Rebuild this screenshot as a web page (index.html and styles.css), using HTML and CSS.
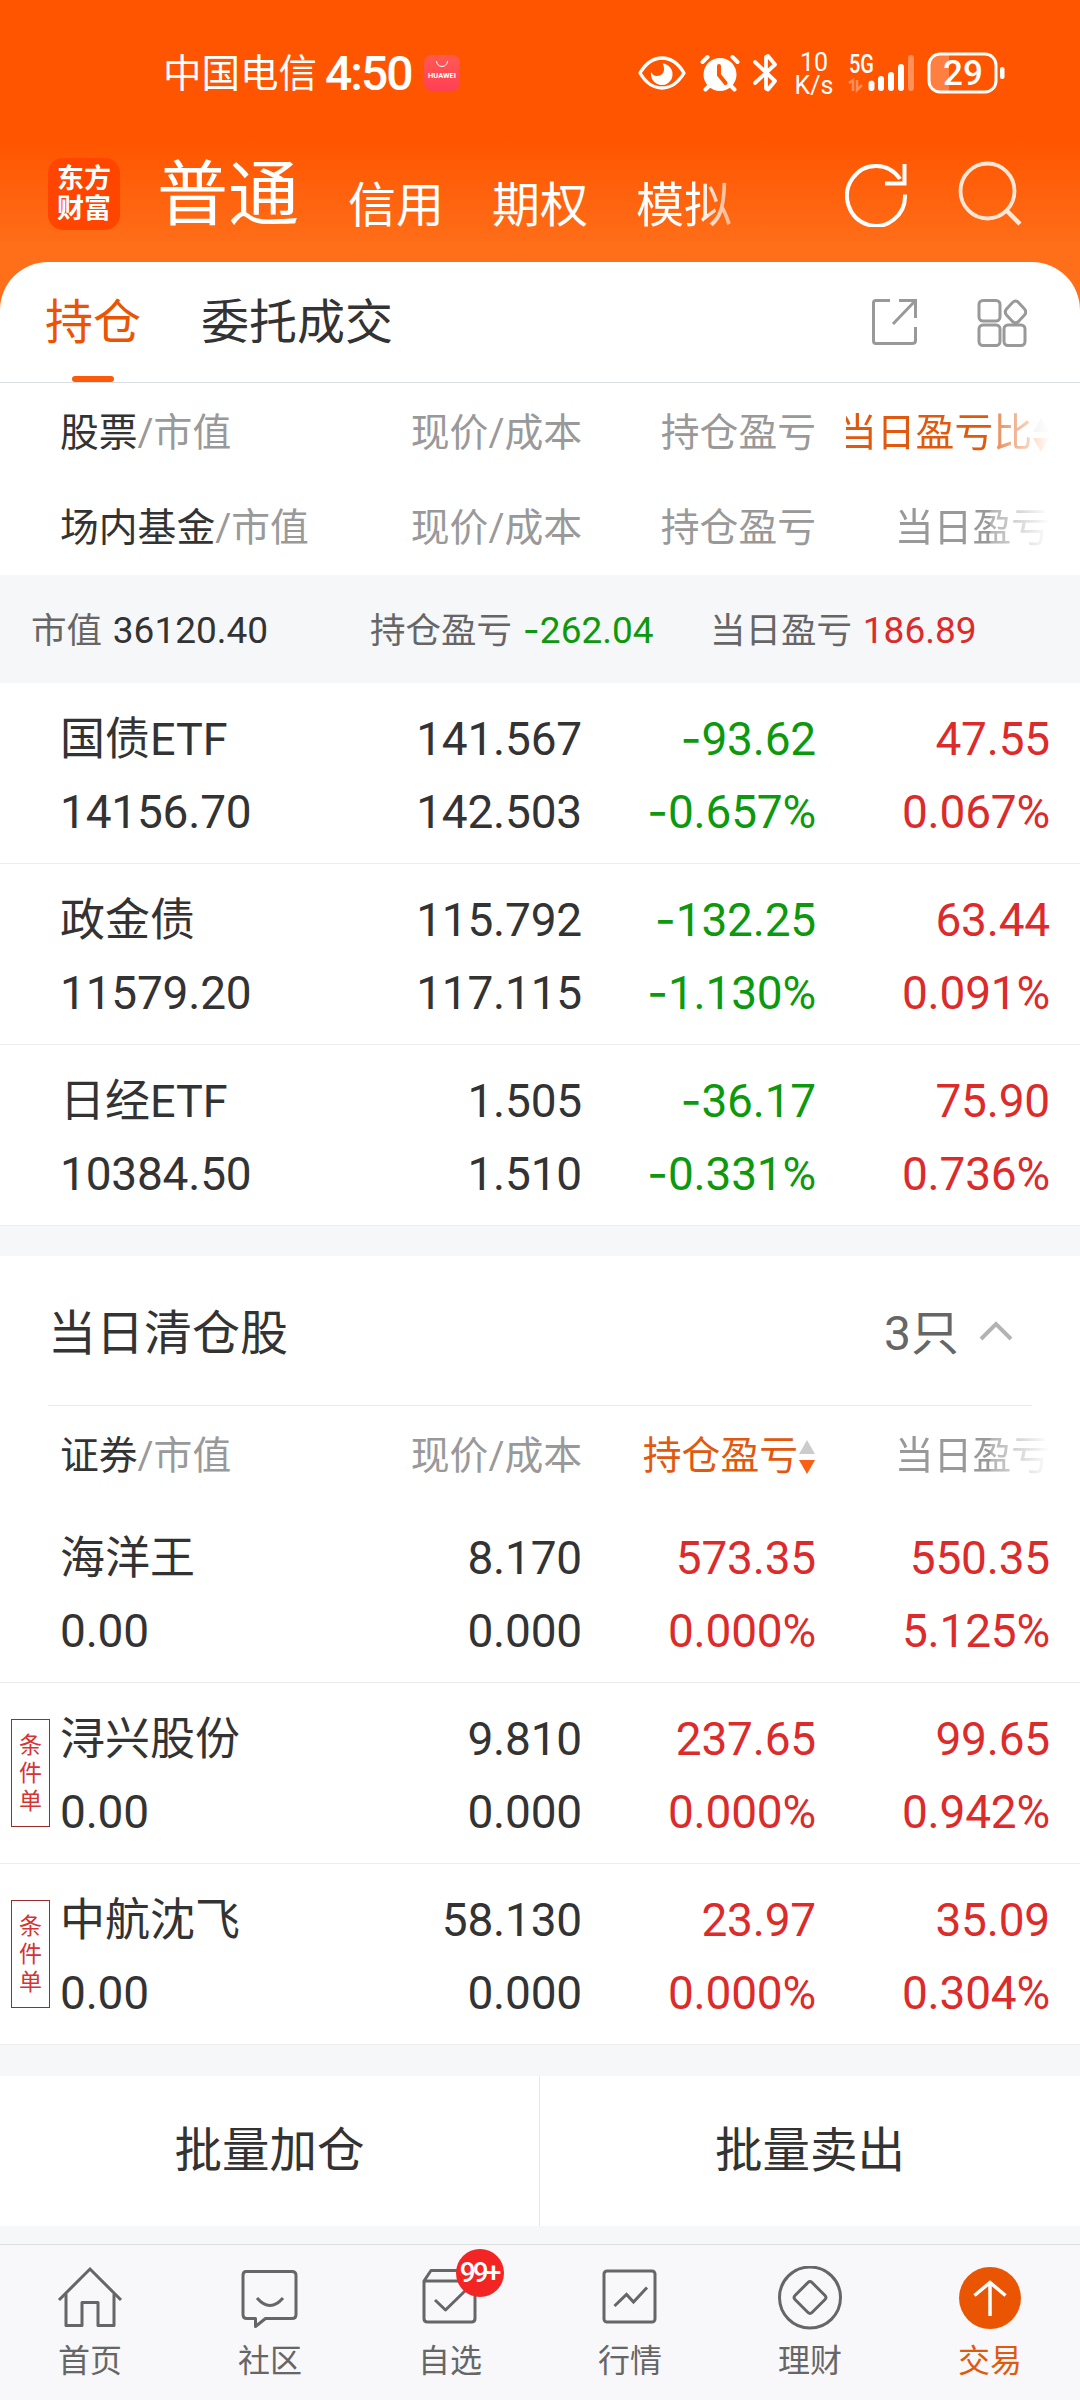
FILE: index.html
```html
<!DOCTYPE html>
<html lang="zh-CN">
<head>
	<meta charset="utf-8">
	<title>持仓</title>
	<link rel="stylesheet" href="styles.css">
</head>
<body>
	<header class="header">
		<div class="status">
			<span class="carrier">中国电信</span>
			<span class="clock">4:50</span>
			<svg class="huawei" width="36" height="36" viewBox="0 0 36 36">
				<defs>
					<linearGradient id="hw" x1="0" y1="0" x2="0" y2="1">
						<stop offset="0" stop-color="#ff5a52"/>
						<stop offset="1" stop-color="#ff3f55"/>
					</linearGradient>
				</defs>
				<rect width="36" height="36" rx="8" fill="url(#hw)"/>
				<path d="M12.5 6a5.5 5.5 0 0 0 11 0" fill="none" stroke="#fff" stroke-width="1"/>
				<text x="18" y="23" text-anchor="middle" textLength="28" lengthAdjust="spacingAndGlyphs" class="huawei-text">HUAWEI</text>
			</svg>
			<div class="status-right">
				<svg class="eye" width="48" height="34" viewBox="0 0 48 34">
					<path d="M2 17C8 7 15 2 24 2s16 5 22 15c-6 10-13 15-22 15S8 27 2 17z" fill="none" stroke="#fff" stroke-width="3.4" stroke-linejoin="round"/>
					<path d="M24.500 7.500A10.800 10.800 0 1 1 13.200 16c1 2.500 3 4 5.500 4 4.500 0 7.300-3 7.300-6.500 0-2.500-.5-4.500-1.500-6z" fill="#fff"/>
				</svg>
				<svg class="alarm" width="40" height="38" viewBox="0 0 40 38">
					<circle cx="20" cy="20.500" r="16.500" fill="#fff"/>
					<path d="M2.500 8l5-5M37.500 8l-5-5M5.500 35.500l5-5M34.500 35.500l-5-5" stroke="#fff" stroke-width="4" stroke-linecap="round"/>
					<path d="M19 12v9l6.500 8" fill="none" stroke="#ff5500" stroke-width="4" stroke-linecap="round" stroke-linejoin="round"/>
				</svg>
				<svg class="bluetooth" width="26" height="38" viewBox="0 0 26 38">
					<path d="M3 8l20 19-7 8.500-2-1V3l2-1 7 8.500L3 29" fill="none" stroke="#fff" stroke-width="3.800" stroke-linejoin="round" stroke-linecap="round"/>
				</svg>
				<div class="speed"><span>10</span><span>K/s</span></div>
				<svg class="signal" width="68" height="40" viewBox="0 0 68 40">
					<text x="1" y="20" textLength="25" lengthAdjust="spacingAndGlyphs" class="signal-text">5G</text>
					<path d="M1 30l4-3v11M9 27v10l5-5" fill="none" stroke="#fff" stroke-opacity=".35" stroke-width="2.500"/>
					<g stroke="#fff" stroke-width="6" stroke-linecap="round">
						<path d="M23.500 30.500v4.500M33 26v9M43 22v13M53 14v21"/>
						<path d="M63 5v30" stroke-opacity=".35"/>
					</g>
				</svg>
				<svg class="battery" width="80" height="42" viewBox="0 0 80 42">
					<path d="M3 13Q3 3 13 3h9v36h-9Q3 39 3 29z" fill="#fff" fill-opacity=".25"/>
					<rect x="2" y="2" width="67" height="38" rx="11" fill="none" stroke="#fff" stroke-width="3"/>
					<rect x="73" y="15" width="4.500" height="12" rx="2" fill="#fff"/>
					<text x="36" y="33" text-anchor="middle" class="battery-text">29</text>
				</svg>
			</div>
		</div>

		<div class="topbar">
			<div class="logo"><span>东方</span><span>财富</span></div>
			<nav class="accounts">
				<a class="account current">普通</a>
				<a class="account">信用</a>
				<a class="account">期权</a>
				<a class="account fading">模拟</a>
			</nav>
			<svg class="refresh" width="64" height="66" viewBox="0 0 64 66">
				<path d="M60 33.500A29 30 0 1 1 55 18" fill="none" stroke="#fff" stroke-width="4"/>
				<path d="M59.500 3v19.500H40" fill="none" stroke="#fff" stroke-width="4"/>
			</svg>
			<svg class="search" width="66" height="66" viewBox="0 0 66 66">
				<ellipse cx="30.500" cy="31" rx="27" ry="27.500" fill="none" stroke="#ffe7d8" stroke-width="3.800"/>
				<path d="M49.500 50.500L63 64" stroke="#ffe7d8" stroke-width="4.500"/>
			</svg>
		</div>
	</header>

	<main>
		<div class="tabs">
			<a class="tab active">持仓</a>
			<a class="tab">委托成交</a>
			<svg class="share" width="48" height="48" viewBox="0 0 48 48" fill="none" stroke="#999" stroke-width="3">
				<path d="M19 2.500H5q-2.500 0-2.500 2.500v38q0 2.500 2.500 2.500h36q3.500 0 3.500-3V29"/>
				<path d="M28 2.500h16.500V20M44.500 2.500L22 26"/>
			</svg>
			<svg class="grid-icon" width="50" height="50" viewBox="0 0 50 50" fill="none" stroke="#999" stroke-width="3">
				<rect x="2" y="2.500" width="21" height="20.500" rx="4"/>
				<rect x="2" y="27" width="21" height="20.500" rx="4"/>
				<rect x="27" y="27" width="21" height="20.500" rx="4"/>
				<path d="M35.500 4.500q3-3 6 0l6 6.500q2.500 3 0 6l-6 6.500q-3 2.500-6 0l-6-6.500q-2.500-3 0-6z"/>
			</svg>
		</div>

		<div class="cols cols-head">
			<span><b>股票</b>/市值</span>
			<span>现价/成本</span>
			<span>持仓盈亏</span>
			<span class="sorted fade">当日盈亏比<i class="sort"></i></span>
		</div>
		<div class="cols cols-head cols-head-fund">
			<span><b>场内基金</b>/市值</span>
			<span>现价/成本</span>
			<span>持仓盈亏</span>
			<span class="fade">当日盈亏</span>
		</div>

		<div class="summary">
			<span class="sum sum-value">市值 <em>36120.40</em></span>
			<span class="sum sum-hold">持仓盈亏 <em class="down"><i class="minus">-</i>262.04</em></span>
			<span class="sum">当日盈亏 <em class="up">186.89</em></span>
		</div>

		<section>
			<div class="cols row">
				<div><p class="name">国债ETF</p><p>14156.70</p></div>
				<div><p>141.567</p><p>142.503</p></div>
				<div class="down"><p><i class="minus">-</i>93.62</p><p><i class="minus">-</i>0.657%</p></div>
				<div class="up"><p>47.55</p><p>0.067%</p></div>
			</div>
			<div class="cols row">
				<div><p class="name">政金债</p><p>11579.20</p></div>
				<div><p>115.792</p><p>117.115</p></div>
				<div class="down"><p><i class="minus">-</i>132.25</p><p><i class="minus">-</i>1.130%</p></div>
				<div class="up"><p>63.44</p><p>0.091%</p></div>
			</div>
			<div class="cols row">
				<div><p class="name">日经ETF</p><p>10384.50</p></div>
				<div><p>1.505</p><p>1.510</p></div>
				<div class="down"><p><i class="minus">-</i>36.17</p><p><i class="minus">-</i>0.331%</p></div>
				<div class="up"><p>75.90</p><p>0.736%</p></div>
			</div>
		</section>

		<div class="cleared-title">
			<h2>当日清仓股</h2>
			<span class="count">3只</span>
			<svg width="34" height="20" viewBox="0 0 34 20">
				<path d="M2 18L17 3l15 15" fill="none" stroke="#b3b3b3" stroke-width="4"/>
			</svg>
		</div>

		<div class="cols cols-head cols-head-cleared">
			<span><b>证券</b>/市值</span>
			<span>现价/成本</span>
			<span class="sorted">持仓盈亏<i class="sort"></i></span>
			<span class="fade">当日盈亏</span>
		</div>

		<section>
			<div class="cols row">
				<div><p class="name">海洋王</p><p>0.00</p></div>
				<div><p>8.170</p><p>0.000</p></div>
				<div class="up"><p>573.35</p><p>0.000%</p></div>
				<div class="up"><p>550.35</p><p>5.125%</p></div>
			</div>
			<div class="cols row">
				<div><p class="name">浔兴股份</p><p>0.00</p></div>
				<div><p>9.810</p><p>0.000</p></div>
				<div class="up"><p>237.65</p><p>0.000%</p></div>
				<div class="up"><p>99.65</p><p>0.942%</p></div>
				<span class="tag">条件单</span>
			</div>
			<div class="cols row">
				<div><p class="name">中航沈飞</p><p>0.00</p></div>
				<div><p>58.130</p><p>0.000</p></div>
				<div class="up"><p>23.97</p><p>0.000%</p></div>
				<div class="up"><p>35.09</p><p>0.304%</p></div>
				<span class="tag">条件单</span>
			</div>
		</section>

		<div class="batch">
			<a>批量加仓</a>
			<a>批量卖出</a>
		</div>
	</main>

	<footer class="tabbar">
		<a>
			<svg width="66" height="66" viewBox="0 0 66 66" fill="none" stroke="#666" stroke-width="3">
				<path d="M2 34L33 3l31 31"/>
				<path d="M9 28v31.500h16V36.500h16v23h16V28" stroke-linejoin="round"/>
			</svg>
			<span>首页</span>
		</a>
		<a>
			<svg width="66" height="66" viewBox="0 0 66 66" fill="none" stroke="#666" stroke-width="3" stroke-linejoin="round">
				<path d="M9 5.500h46q4 0 4 4v39q0 4-4 4H28.500L18.500 60.500v-8H10q-4 0-4-4V9.500q0-4 3-4z"/>
				<path d="M20 32q13 15 26 0"/>
			</svg>
			<span>社区</span>
		</a>
		<a>
			<svg width="66" height="66" viewBox="0 0 66 66" fill="none" stroke="#666" stroke-width="3" stroke-linejoin="round">
				<path d="M7 15l7-10.500h37l7 10.500v37.500q0 3.500-3.500 3.500H10.500Q7 56 7 52.500zM7 15h51"/>
				<path d="M18 34l10.500 10L49 24"/>
			</svg>
			<i class="badge">99+</i>
			<span>自选</span>
		</a>
		<a>
			<svg width="66" height="66" viewBox="0 0 66 66" fill="none" stroke="#666" stroke-width="3">
				<rect x="7" y="5" width="51" height="51" rx="3"/>
				<path d="M17.500 40L29.500 28.500l7 7.500L50 21.500"/>
			</svg>
			<span>行情</span>
		</a>
		<a>
			<svg width="66" height="66" viewBox="0 0 66 66" fill="none" stroke="#666" stroke-width="3" stroke-linejoin="round">
				<circle cx="33" cy="31.500" r="30.500"/>
				<path d="M31 16.500q2-2 4 0l13 13q2 2 0 4l-13 13q-2 2-4 0l-13-13q-2-2 0-4z"/>
			</svg>
			<span>理财</span>
		</a>
		<a class="on">
			<svg width="66" height="66" viewBox="0 0 66 66" fill="none" stroke="#fff" stroke-width="3.500">
				<circle cx="33" cy="32" r="31" fill="#ea5504" stroke="none"/>
				<path d="M33 50V17M17.500 29.500L33 16.500l15.500 13"/>
			</svg>
			<span>交易</span>
		</a>
	</footer>
</body>
</html>
```
FILE: styles.css
```css
* {
	box-sizing: border-box;
}

body {
	width: 1080px;
	height: 2400px;
	margin: 0;
	background: #f6f7f9;
	color: #333;
	font-family: Roboto, "Noto Sans CJK SC", sans-serif;
	overflow: hidden;
}

p, h2 {
	margin: 0;
	font-weight: 400;
}

b {
	color: #333;
	font-weight: 400;
}

em, i {
	font-style: normal;
}

svg {
	display: block;
	flex: none;
}

.up { color: #dc2b2b; }
.down { color: #0d990d; }

.minus {
	font-family: Inter, sans-serif;
	line-height: 1;
}

/* header */

.header {
	height: 310px;
	background: linear-gradient(#ff5500 140px, #ff6f1a 250px);
	color: #fff;
}

.status {
	height: 146px;
	padding: 0 73px 0 163px;
	display: flex;
	align-items: center;
}

.carrier {
	padding-top: 2px;
	font-size: 38.5px;
	line-height: 60px;
}

.clock {
	padding-top: 2px;
	margin-left: 8px;
	font-size: 48px;
	font-weight: 500;
	letter-spacing: -2px;
	line-height: 60px;
}

.huawei { margin-left: 12px; }

.huawei-text {
	fill: #fff;
	font-size: 7px;
	font-weight: 700;
}

.status-right {
	margin-left: auto;
	display: flex;
	align-items: center;
}

.alarm { margin-left: 14px; }
.bluetooth { margin-left: 12px; }

.speed {
	width: 38px;
	margin-left: 17px;
	padding-top: 2px;
	display: flex;
	flex-direction: column;
	align-items: center;
	font-size: 25px;
	line-height: 23px;
}

.signal { margin-left: 15px; }

.signal-text {
	fill: #fff;
	font-size: 25px;
	font-weight: 500;
}

.battery { margin-left: 11px; }

.battery-text {
	fill: #fff;
	font-size: 35px;
	font-weight: 500;
}

.topbar {
	height: 116px;
	padding: 0 57px 0 48px;
	display: flex;
	align-items: flex-start;
}

.logo {
	width: 72px;
	height: 72px;
	margin-top: 12px;
	padding: 6px 0;
	border-radius: 15px;
	background: #ff4500;
	display: flex;
	flex-direction: column;
	align-items: center;
	font-size: 27px;
	font-weight: 700;
	line-height: 30px;
}

.accounts {
	margin-left: 37px;
	display: flex;
	align-items: baseline;
}

.account {
	margin-right: 48px;
	padding-top: 4px;
	font-size: 48px;
	position: relative;
	top: 3px;
}

.account.current {
	margin-right: 49px;
	padding-top: 0;
	font-size: 71px;
	line-height: 98px;
	top: 0;
}

.fading {
	-webkit-mask-image: linear-gradient(90deg, #000 65%, rgba(0, 0, 0, .5));
	mask-image: linear-gradient(90deg, #000 65%, rgba(0, 0, 0, .5));
}

.refresh {
	margin: 15px 0 0 auto;
}

.search {
	margin: 14px 0 0 48px;
}

/* card */

main {
	margin-top: -48px;
	border-radius: 48px 48px 0 0;
	background: #fff;
}

.tabs {
	height: 121px;
	padding: 0 53px 0 45px;
	border-bottom: 1px solid #dcdfe1;
	display: flex;
}

.tab {
	height: 120px;
	margin-right: 60px;
	font-size: 48px;
	line-height: 122px;
}

.tab.active {
	color: #ea5504;
	display: flex;
	flex-direction: column;
	align-items: center;
}

.tab.active::after {
	content: "";
	width: 42px;
	height: 6px;
	margin-top: -8px;
	border-radius: 3px;
	background: #fa5a0a;
}

.share { margin: 36px 0 0 auto; }
.grid-icon { margin: 36px 0 0 58px; }

.cols {
	padding: 0 30px 0 60px;
	display: grid;
	grid-template-columns: 300px 222px 234px 234px;
	text-align: right;
}

.cols > :first-child {
	text-align: left;
}

.cols-head {
	height: 96px;
	color: #999;
	font-size: 38.800px;
	line-height: 100px;
	white-space: nowrap;
}

.cols-head-fund { line-height: 98px; }
.cols-head-cleared { line-height: 99px; }

.sorted {
	color: #e0590f;
	display: flex;
	justify-content: flex-end;
	align-items: center;
}

.sorted.fade {
	overflow: hidden;
}

.fade {
	margin-left: 30px;
	-webkit-mask-image: linear-gradient(90deg, #000 144px, rgba(0, 0, 0, .75) 145px, rgba(0, 0, 0, .05) 200px);
	mask-image: linear-gradient(90deg, #000 144px, rgba(0, 0, 0, .75) 145px, rgba(0, 0, 0, .05) 200px);
}

.sort {
	width: 16px;
	height: 34px;
	margin: 3px 1px 0 1px;
	display: flex;
	flex: none;
	flex-direction: column;
	justify-content: space-between;
}

.sort::before, .sort::after {
	content: "";
	border: 8px solid transparent;
}

.sort::before {
	border-top: 0;
	border-bottom: 14px solid #ccc;
}

.sort::after {
	border-bottom: 0;
	border-top: 14px solid #fa5f14;
}

.summary {
	height: 108px;
	padding: 2px 0 0 31px;
	background: #f6f7f9;
	color: #666;
	display: flex;
	font-size: 35.500px;
	line-height: 108px;
	white-space: pre;
}

.sum em {
	margin-left: 2px;
	font-size: 37px;
}

.sum-value {
	width: 339px;
}

.sum-value em {
	color: #333;
}

.sum-hold {
	width: 340px;
}

.row {
	height: 181px;
	padding-top: 20px;
	border-bottom: 1px solid #ebedee;
	font-size: 46px;
	letter-spacing: -.2px;
	line-height: 73px;
	position: relative;
}

.name {
	font-size: 45px;
	letter-spacing: 0;
}

.tag {
	width: 39px;
	height: 108px;
	padding: 12px 7px;
	border: 1px solid #9c2b2b;
	color: #d63333;
	font-size: 23px;
	line-height: 28px;
	text-align: center;
	position: absolute;
	left: 11px;
	top: 36px;
}

/* cleared today */

.cleared-title {
	height: 180px;
	padding: 26px 67px 0 48px;
	background: linear-gradient(#f6f7f9 30px, transparent 30px), linear-gradient(#ebedee, #ebedee) 48px 100% / 984px 1px no-repeat;
	display: flex;
	align-items: center;
}

.cleared-title h2 {
	margin-right: auto;
	font-size: 48px;
}

.cleared-title svg {
	margin-top: 3px;
}

.count {
	margin-right: 20px;
	color: #666;
	font-size: 48px;
}

/* batch buttons */

.batch {
	height: 181px;
	border-top: 31px solid #f6f7f9;
	display: flex;
}

.batch a {
	width: 539px;
	font-size: 47.500px;
	line-height: 151px;
	text-align: center;
}

.batch a + a {
	width: 541px;
	border-left: 1px solid #e6e8ea;
}

/* bottom tab bar */

.tabbar {
	height: 157px;
	margin-top: 18px;
	border-top: 1px solid #dfe0e2;
	background: #f8f8fa;
	display: flex;
}

.tabbar a {
	flex: 1;
	padding-top: 21px;
	color: #666;
	display: flex;
	flex-direction: column;
	align-items: center;
	font-size: 32px;
	line-height: 58px;
	position: relative;
}

.tabbar .on {
	color: #e0590f;
}

.badge {
	width: 48px;
	height: 48px;
	border-radius: 50%;
	background: #f22424;
	color: #fff;
	font-size: 28px;
	font-weight: 500;
	letter-spacing: -3px;
	line-height: 48px;
	text-align: center;
	text-indent: -2px;
	position: absolute;
	left: 96px;
	top: 4px;
}
```
